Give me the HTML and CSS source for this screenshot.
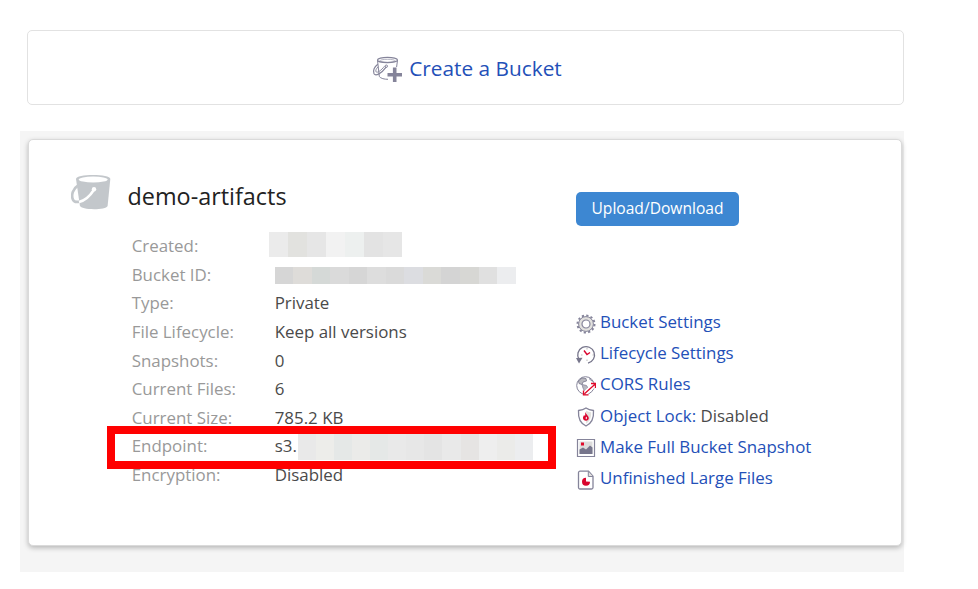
FILE: index.html
```html
<!DOCTYPE html>
<html lang="en">
<head>
<meta charset="utf-8">
<title>Buckets</title>
<link rel="stylesheet" href="styles.css">
</head>
<body>
<a class="create">
  <svg class="create-icon" width="32" height="28" viewBox="0 0 32 28" fill="none" stroke="#85849a">
    <ellipse cx="15.5" cy="4" rx="10" ry="2.7" stroke-width="1.2"/>
    <ellipse cx="15.5" cy="4.8" rx="7.6" ry="1.5" stroke-width=".6"/>
    <path d="M5.5 4.2 7.3 20.5c1.5 2 5 2.8 8.7 2.8M25.5 4.2 24.6 11" stroke-width="1"/>
    <path d="M5.8 8.2C2.5 10.5.5 15 2 17.8c1.7 2.7 7.3-.2 12.3-7" stroke-width="1.2"/>
    <path d="M6.2 10.7c-2.2 2-3 4.3-2 5.3 1.2 1 5-1.5 8.3-5.8" stroke-width=".9"/>
    <circle cx="14.3" cy="10.2" r="1.2"/>
    <path d="M22.7 11.6v14.500M15.500 18.800H30" stroke-width="3.600"/>
  </svg>
  <span>Create a Bucket</span>
</a>
<section class="panel">
  <div class="card">
    <div class="info">
      <header class="title">
        <svg width="40" height="36" viewBox="0 0 40 36">
          <path d="M5 5C5 2 13 .9 22 .9S39.3 2 39.3 5L36.6 32c-1 2.3-7 3.2-13.600 3.200-7.300 0-13.300-1.200-14.100-3.400z" fill="#c3c7cb"/>
          <ellipse cx="22.200" cy="5.500" rx="14.500" ry="3" fill="#fff"/>
          <path d="M6.500 12C2 14.500 0 21 1.900 25.600c1 2.200 3.500 2.800 7 1.800" fill="none" stroke="#c3c7cb" stroke-width="2.600"/>
          <path d="M8 28C14 26.500 19 22 22.800 16" fill="none" stroke="#fff" stroke-width="2.500"/>
          <circle cx="23" cy="15.200" r="2.200" fill="#fff"/>
        </svg>
        <h1>demo-artifacts</h1>
      </header>
      <dl class="facts">
        <dt>Created:</dt><dd><span class="mask mask-date"><i class="a"></i><i class="b"></i><i class="c"></i><i class="d"></i><i class="e"></i><i class="f"></i><i class="c"></i></span></dd>
        <dt>Bucket ID:</dt><dd><span class="mask mask-id"><i class="g"></i><i class="h"></i><i class="j"></i><i class="k"></i><i class="g"></i><i class="l"></i><i class="k"></i><i class="m"></i><i class="n"></i><i class="o"></i><i class="p"></i><i class="q"></i><i class="r"></i></span></dd>
        <dt>Type:</dt><dd>Private</dd>
        <dt>File Lifecycle:</dt><dd>Keep all versions</dd>
        <dt>Snapshots:</dt><dd>0</dd>
        <dt>Current Files:</dt><dd>6</dd>
        <dt>Current Size:</dt><dd>785.2 KB</dd>
        <dt>Endpoint:</dt><dd>s3.<span class="mask mask-end"><i class="s"></i><i class="t"></i><i class="u"></i><i class="v"></i><i class="u"></i><i class="s"></i><i class="w"></i><i class="x"></i><i class="s"></i><i class="y"></i><i class="z"></i><i class="v"></i><i class="r"></i></span></dd>
        <dt>Encryption:</dt><dd>Disabled</dd>
      </dl>
    </div>
    <div class="actions">
      <a class="button">Upload/Download</a>
      <ul>
        <li>
          <svg viewBox="0 0 20 20"><circle cx="10" cy="10" r="8.500" fill="none" stroke="#85849a" stroke-width="2" stroke-dasharray="2.200 2.250"/><circle cx="10" cy="10" r="7.400" fill="#e2e1de" stroke="#85849a"/><circle cx="10" cy="10" r="4" fill="#fff" stroke="#85849a" stroke-width="1.200"/></svg>
          <a>Bucket Settings</a></li>
        <li>
          <svg viewBox="0 0 20 20" fill="none"><path d="M3 14.500A8.400 8.400 0 1 1 12 18.200" stroke="#77768c" stroke-width="1.300"/><path d="M0 13l6.500-.2L3 18.500z" fill="#77768c"/><path d="M11 3v1.500M18 10h-1.500M5 10h1.500M11 16v-1.500" stroke="#aaa" stroke-width=".8"/><path d="M8 5.500 11 9.500l3-2" stroke="#d9052e" stroke-width="1.400"/></svg>
          <a>Lifecycle Settings</a></li>
        <li>
          <svg viewBox="0 0 20 20" fill="none"><circle cx="9.500" cy="9.500" r="8.800" fill="#fff" stroke="#85849a"/><path d="M2.500 5 6 2l4 .500.500 2.500L7 6 6 8.500 3 7.500z" fill="#b9b9bf" stroke="#77768c" stroke-width=".8"/><path d="M6 8.500l4.500 1 1.500 2.500-3.500 3-1.500-3z" fill="#b9b9bf" stroke="#85849a" stroke-width=".8"/><path d="M13 2.500l3.500 3" stroke="#85849a"/><path d="M9 17.500 18 9" stroke="#fff" stroke-width="4.500"/><path d="M8.500 17.800 19 8.300M15 7.500h4.500v4.500M12.500 18.900H7.500v-4.400" stroke="#e00a2b" stroke-width="1.300"/></svg>
          <a>CORS Rules</a></li>
        <li>
          <svg viewBox="0 0 20 20"><path d="M10 1c2.300 1.800 4.700 2.300 7.500 2.500C18 11 15.500 16.500 10 19 4.500 16.500 2 11 2.500 3.500 5.300 3.300 7.700 2.800 10 1z" fill="#fff" stroke="#85849a" stroke-width="1.300"/><path d="M10 3.500c1.700 1.100 3.400 1.600 5.200 1.700C15.300 10.500 13.800 14.500 10 16.700z" fill="#e2e1de"/><path d="M9.300 5c.3 2 3.500 3.800 3.500 6 0 1.800-1.300 2.700-2.800 2.700s-3-.9-3-2.700c0-1.300.7-2 1-3l1 1C9.500 8 9 6.500 9.300 5z" fill="#d9052e"/><path d="m9.300 11 1.700-1.500-.3 3z" fill="#fff"/></svg>
          <span><a>Object Lock:</a> Disabled</span></li>
        <li>
          <svg viewBox="0 0 20 20"><path d="M1.500 1.500h17v17h-17z" fill="#fff" stroke="#85849a" stroke-width="1.200"/><path d="M3.500 3.500h13v12h-13z" fill="#dddcdc"/><path d="M3.500 11.500 7 9.500l3 2 4-4 2.500 2v6.500h-13z" fill="#77768c"/><path d="M5 4.500h3V7.500H5z" fill="#e00a2b"/></svg>
          <a>Make Full Bucket Snapshot</a></li>
        <li>
          <svg viewBox="0 0 20 20"><path d="M4 1.200h8.500l4.500 5v11.300a1.500 1.500 0 0 1-1.500 1.500H4a1.500 1.500 0 0 1-1.500-1.500V2.700A1.500 1.500 0 0 1 4 1.200z" fill="#fff" stroke="#85849a" stroke-width="1.300"/><path d="M12.300 1.500v5H17" fill="#e2e1de" stroke="#85849a"/><path d="M10 11.500V7.700a4 4 0 1 0 4 4z" fill="#d9052e"/></svg>
          <a>Unfinished Large Files</a></li>
      </ul>
    </div>
    <div class="highlight"></div>
  </div>
</section>
</body>
</html>
```
FILE: styles.css
```css
* { box-sizing: border-box; }
body {
  margin: 0;
  padding: 30px 74px 0 20px;
  height: 589px;
  overflow: hidden;
  background: #fff;
  color: #4a4a4a;
  font-family: "Open Sans", "Noto Sans", sans-serif;
  font-size: 16.9px;
}
a { color: #2350b8; }
.create {
  display: flex;
  justify-content: center;
  align-items: center;
  gap: 5px;
  height: 75px;
  margin-left: 7px;
  padding: 1px 0 0 3px;
  border: 1px solid #e2e2e2;
  border-radius: 5px;
  font-size: 20.8px;
}
.create-icon { display: block; margin-top: 3px; }
.panel {
  height: 441px;
  margin-top: 26px;
  padding: 8px 2px 26px 8px;
  background: #f5f5f5;
}
.card {
  position: relative;
  display: flex;
  height: 407px;
  border: 1px solid #dadada;
  border-radius: 5px;
  background: #fff;
  box-shadow: 0 2px 5px rgba(0, 0, 0, .25);
}
.info { width: 547px; padding: 34px 0 0 42px; }
.title { display: flex; gap: 16.500px; height: 58px; }
h1 {
  margin: 5px 0 0;
  color: #222;
  font-size: 23.4px;
  font-weight: 400;
  line-height: 34px;
}
.facts {
  display: grid;
  grid-template-columns: 143px 1fr;
  grid-auto-rows: 28.65px;
  margin: 0 0 0 60.7px;
  line-height: 28.65px;
}
dt { color: #999; }
dd { display: flex; align-items: center; margin: 0; }
.mask { display: flex; }
.mask i { flex: 1; }
.mask-date { width: 133px; height: 25px; margin: -3px 0 0 -6px; }
.mask-id { width: 241px; height: 17px; margin-top: 1px; }
.mask-end { width: 235px; height: 27px; margin-left: 1px; }
.a { background: #ebebeb; }
.b { background: #e2e2df; }
.c { background: #e6e6e6; }
.d { background: #f2f2f2; }
.e { background: #edf0ef; }
.f { background: #e3e3e3; }
.g { background: #d6d6d6; }
.h { background: #dedcd9; }
.j { background: #d5d9d7; }
.k { background: #dadada; }
.l { background: #dddddd; }
.m { background: #dcdde1; }
.n { background: #dadad7; }
.o { background: #d4d4d4; }
.p { background: #d7d7d4; }
.q { background: #e0e0e0; }
.r { background: #ecedef; }
.s { background: #e9e9e9; }
.t { background: #ededea; }
.u { background: #e5e8e7; }
.v { background: #ebebe9; }
.w { background: #e7e7e7; }
.x { background: #e4e4e4; }
.y { background: #e6e4e3; }
.z { background: #eeeeee; }
.actions { padding-top: 52px; }
.button {
  display: block;
  width: 163px;
  height: 34px;
  border-radius: 5px;
  background: #3d87d2;
  color: #fff;
  font-size: 15.6px;
  line-height: 33px;
  text-align: center;
}
ul { margin: 80px 0 0; padding: 0; list-style: none; }
li { display: flex; align-items: center; gap: 4px; height: 31.2px; white-space: nowrap; }
li svg { width: 20px; height: 20px; margin-top: 4px; }
.highlight {
  position: absolute;
  left: 78px;
  top: 286px;
  width: 449px;
  height: 43px;
  border: 8px solid #f00;
}
```
